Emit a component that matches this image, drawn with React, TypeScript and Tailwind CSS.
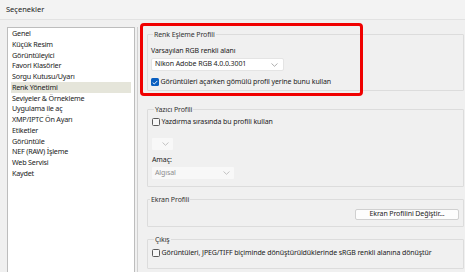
import React from "react";

const Chevron = ({ color = "#6b6b6b" }: { color?: string }) => (
  <svg width="7" height="4" viewBox="0 0 7 4" fill="none">
    <path d="M0.5 0.5 L3.5 3.3 L6.5 0.5" stroke={color} strokeWidth="0.8" />
  </svg>
);

const Check = ({ checked = false }: { checked?: boolean }) =>
  checked ? (
    <span className="flex h-[8px] w-[8px] shrink-0 items-center justify-center rounded-[1.5px] bg-[#0a5fc0]">
      <svg width="6" height="5" viewBox="0 0 6 5" fill="none">
        <path d="M0.7 2.6 L2.3 4 L5.3 0.9" stroke="#fff" strokeWidth="0.9" />
      </svg>
    </span>
  ) : (
    <span className="h-[8px] w-[8px] shrink-0 rounded-[1.5px] border border-[#5a5a5a] bg-[#f7f7f7]" />
  );

const Group = ({
  title,
  className,
  children,
}: {
  title: string;
  className?: string;
  children?: React.ReactNode;
}) => (
  <fieldset className={`rounded-[1px] border border-[#dcdcdc] ${className ?? ""}`}>
    <legend className="ml-[2px] px-[1px] text-[7px] leading-[9px] text-[#333]">{title}</legend>
    {children}
  </fieldset>
);

const items = [
  "Genel",
  "Küçük Resim",
  "Görüntüleyici",
  "Favori Klasörler",
  "Sorgu Kutusu/Uyarı",
  "Renk Yönetimi",
  "Seviyeler & Örnekleme",
  "Uygulama ile aç",
  "XMP/IPTC Ön Ayarı",
  "Etiketler",
  "Görüntüle",
  "NEF (RAW) İşleme",
  "Web Servisi",
  "Kaydet",
];

export default function App() {
  return (
    <div
      className="relative h-[272px] w-[465px] overflow-hidden bg-[#f0f0f0] text-[7px] text-[#1b1b1b]"
      style={{ fontFamily: '"Noto Sans", "Open Sans", sans-serif' }}
    >
      <div className="flex h-[20px] items-center border-b border-[#e2e2e2] bg-[#f3f3f3] pl-[6px] text-[7.5px] text-[#222]">
        Seçenekler
      </div>
      <div className="flex">
        <div className="ml-[7px] mt-[7px] h-[260px] w-[128px] shrink-0 border border-[#bdbdbd] bg-white">
          <div className="px-[3px]">
            {items.map((it) => (
              <div
                key={it}
                className={`h-[10.77px] pl-[1px] text-[7.2px] leading-[10.77px] tracking-[-0.2px] ${
                  it === "Renk Yönetimi" ? "bg-[#e5e5da]" : ""
                }`}
              >
                {it}
              </div>
            ))}
          </div>
        </div>
        <div className="ml-[2px] mt-[7px] h-[260px] w-[1px] bg-[#d0d0d0]" />
        <div className="ml-[9px] mt-[10px] flex w-[317px] flex-col tracking-[-0.1px]">
          <Group title="Renk Eşleme Profili" className="h-[61px] pl-[3px]">
            <div className="mt-[7px] leading-[10px]">Varsayılan RGB renkli alanı</div>
            <div className="mt-[2px] flex h-[13px] w-[133px] items-center justify-between rounded-[2px] border border-[#e4e4e4] bg-white pl-[3px] pr-[5px]">
              <span>Nikon Adobe RGB 4.0.0.3001</span>
              <Chevron color="#9a9a9a" />
            </div>
            <div className="mt-[6px] flex items-center gap-[1.5px] leading-[10px]">
              <Check checked />
              <span>Görüntüleri açarken gömülü profil yerine bunu kullan</span>
            </div>
          </Group>
          <Group title="Yazıcı Profili" className="mt-[14px] h-[82px] pl-[4px]">
            <div className="mt-[3px] flex items-center gap-[1.5px] leading-[10px]">
              <Check />
              <span>Yazdırma sırasında bu profili kullan</span>
            </div>
            <div className="mt-[11px] flex h-[12px] w-[21px] items-center justify-end rounded-[1px] bg-[#f8f8f8] pr-[4px]">
              <Chevron color="#b5b5b5" />
            </div>
            <div className="mt-[5px] leading-[10px]">Amaç:</div>
            <div className="mt-[2px] flex h-[12px] w-[82px] items-center justify-between rounded-[1px] bg-[#f8f8f8] pl-[3px] pr-[4px] text-[#8c8c8c]">
              <span>Algısal</span>
              <Chevron color="#b5b5b5" />
            </div>
          </Group>
          <Group title="Ekran Profili" className="mt-[8px] h-[32px] pr-[4px]">
            <div className="mt-[5px] flex justify-end">
              <div className="flex h-[11px] w-[104px] items-center justify-center rounded-[2px] border border-[#d0d0d0] bg-[#fdfdfd] text-[7px]">
                Ekran Profilini Değiştir...
              </div>
            </div>
          </Group>
          <Group title="Çıkış" className="mt-[8px] h-[34px] pl-[4px]">
            <div className="mt-[4px] flex items-center gap-[1.5px] leading-[10px]">
              <Check />
              <span>Görüntüleri, JPEG/TIFF biçiminde dönüştürüldüklerinde sRGB renkli alanına dönüştür</span>
            </div>
          </Group>
        </div>
      </div>
      <div className="pointer-events-none absolute left-[140px] top-[23px] h-[73px] w-[223px] rounded-[4px] border-[3px] border-[#f00000]" />
    </div>
  );
}
